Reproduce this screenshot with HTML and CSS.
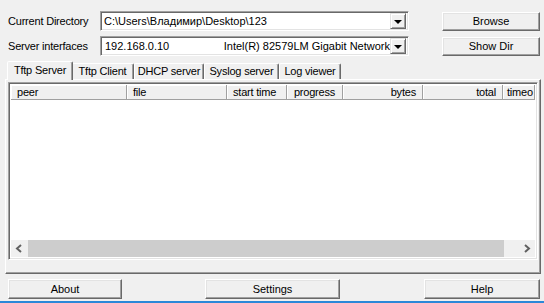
FILE: index.html
```html
<!DOCTYPE html>
<html lang="en">
<head>
  <meta charset="UTF-8" />
  <title>Tftpd</title>
  <link rel="stylesheet" href="styles.css">
</head>
<body>
  <div class="window">
    <div class="top">
      <label class="lbl">Current Directory</label>
      <div class="combo">
        <span class="combo-text">C:\Users\Владимир\Desktop\123</span>
        <span class="combo-btn"><i class="tri"></i></span>
      </div>
      <button class="btn">Browse</button>

      <label class="lbl">Server interfaces</label>
      <div class="combo">
        <span class="combo-text ip">192.168.0.10</span>
        <span class="combo-text nic">Intel(R) 82579LM Gigabit Network</span>
        <span class="combo-btn"><i class="tri"></i></span>
      </div>
      <button class="btn">Show Dir</button>
    </div>

    <div class="tabs">
      <div class="tab active t1">Tftp Server</div>
      <div class="tab t2">Tftp Client</div>
      <div class="tab t3">DHCP server</div>
      <div class="tab t4">Syslog server</div>
      <div class="tab t5">Log viewer</div>
    </div>

    <div class="panel">
      <div class="list">
        <div class="head">
          <div class="col c-peer">peer</div>
          <div class="col c-file">file</div>
          <div class="col c-start">start time</div>
          <div class="col c-prog">progress</div>
          <div class="col c-bytes">bytes</div>
          <div class="col c-total">total</div>
          <div class="col c-timeo">timeo</div>
        </div>
        <div class="rows"></div>
        <div class="hscroll">
          <span class="arrow">
            <svg width="17" height="15" viewBox="0 0 17 15"><polyline points="10,4 6,7.5 10,11" fill="none" stroke="#606060" stroke-width="2"/></svg>
          </span>
          <span class="thumb"></span>
          <span class="arrow">
            <svg width="17" height="15" viewBox="0 0 17 15"><polyline points="7,4 11,7.5 7,11" fill="none" stroke="#606060" stroke-width="2"/></svg>
          </span>
        </div>
      </div>
    </div>

    <div class="bottom">
      <button class="btn b-about">About</button>
      <button class="btn b-settings">Settings</button>
      <button class="btn b-help">Help</button>
    </div>
  </div>
  <div class="edge"></div>
</body>
</html>
```

FILE: styles.css
```css
body {
  margin: 0;
  background-color: #f0f0f0;
  font-family: 'Liberation Sans', Arial, sans-serif;
  font-size: 11px;
  color: #000;
  width: 544px;
  height: 303px;
  overflow: hidden;
}

.window {
  height: 301px;
  display: flex;
  flex-direction: column;
}

.top {
  display: grid;
  grid-template-columns: 92px 309px 1fr 98px;
  grid-template-rows: 20px 20px;
  row-gap: 5px;
  padding: 11px 4px 0 8px;
  align-items: center;
}

.lbl {
  grid-column: 1;
  letter-spacing: -0.2px;
}

.combo {
  grid-column: 2;
  height: 20px;
  box-sizing: border-box;
  background: #fff;
  border: 1px solid;
  border-color: #a0a0a0 #fff #fff #a0a0a0;
  box-shadow: inset 1px 1px #696969, inset -1px -1px #e3e3e3;
  display: flex;
  align-items: center;
  padding: 0 2px 0 3px;
}

.combo-text {
  white-space: nowrap;
}

.ip {
  width: 127px;
  padding-left: 1px;
}

.nic {
  flex: 1;
}

.combo-text:first-child {
  flex: 1;
}

.combo-btn {
  width: 16px;
  height: 16px;
  box-sizing: border-box;
  background: #f0f0f0;
  border: 1px solid;
  border-color: #e3e3e3 #696969 #696969 #e3e3e3;
  box-shadow: inset 1px 1px #fff, inset -1px -1px #a0a0a0;
  display: flex;
  align-items: center;
  justify-content: center;
}

.tri {
  width: 0;
  height: 0;
  border-left: 4px solid transparent;
  border-right: 4px solid transparent;
  border-top: 4px solid #000;
  margin-top: 1px;
}

.btn {
  grid-column: 4;
  height: 19px;
  font-family: inherit;
  font-size: 11px;
  color: #000;
  background: #f0f0f0;
  border: 1px solid;
  border-color: #fff #696969 #696969 #fff;
  box-shadow: inset -1px -1px #a0a0a0, inset 1px 1px #e3e3e3;
  padding: 0;
}

.tabs {
  display: flex;
  align-items: flex-end;
  height: 19px;
  margin-top: 4px;
  padding-left: 7px;
}

.tab {
  height: 16px;
  box-sizing: border-box;
  border: 1px solid;
  border-bottom: none;
  border-color: #fff #696969 transparent #fff;
  box-shadow: inset -1px 0 #a0a0a0;
  border-radius: 2px 2px 0 0;
  padding-top: 1px;
  text-align: center;
  white-space: nowrap;
  letter-spacing: -0.2px;
}

.t1 { width: 66px; }
.t2 { width: 63px; }
.t3 { width: 70px; }
.t4 { width: 75px; }
.t5 { width: 62px; }

.tab.active {
  height: 19px;
  padding-top: 2px;
  margin-right: -2px;
  position: relative;
  z-index: 1;
  background: #f0f0f0;
  margin-bottom: -1px;
}

.panel {
  margin: 0 3px 0 5px;
  height: 195px;
  box-sizing: border-box;
  border: 1px solid;
  border-color: #fff #696969 #696969 #fff;
  box-shadow: inset -1px -1px #a0a0a0;
  padding: 2px 2px 0 2px;
}

.list {
  height: 178px;
  box-sizing: border-box;
  background: #fff;
  border: 1px solid;
  border-color: #a0a0a0 #fff #fff #a0a0a0;
  box-shadow: inset 1px 1px #696969, inset -1px -1px #e3e3e3;
  padding: 2px;
  display: flex;
  flex-direction: column;
}

.head {
  display: flex;
  height: 15px;
  background: #f0f0f0;
}

.col {
  box-sizing: border-box;
  height: 15px;
  line-height: 14px;
  padding: 0 6px;
  border-right: 1px solid #a0a0a0;
  box-shadow: inset 1px 1px #fff;
  border-bottom: 1px solid #a0a0a0;
  white-space: nowrap;
  overflow: hidden;
  letter-spacing: -0.2px;
}

.c-peer { width: 116px; }
.c-file { width: 100px; }
.c-start { width: 60px; }
.c-prog { width: 56px; text-align: center; }
.c-bytes { width: 80px; text-align: right; }
.c-total { width: 80px; text-align: right; }
.c-timeo { flex: 1; padding: 0 0 0 4px; }

.rows {
  flex: 1;
}

.hscroll {
  height: 17px;
  display: flex;
  background: #f0f0f0;
}

.arrow {
  width: 17px;
  display: flex;
  align-items: center;
}

.thumb {
  flex: 1;
  background: #cdcdcd;
  margin-right: 14px;
}

.bottom {
  display: flex;
  padding: 5px 4px 0 8px;
}

.bottom .btn {
  height: 20px;
}

.b-about { width: 114px; }
.b-settings { width: 135px; margin-left: 83px; }
.b-help { width: 116px; margin-left: auto; }

.edge {
  height: 2px;
  background: #2b88d8;
}
```
